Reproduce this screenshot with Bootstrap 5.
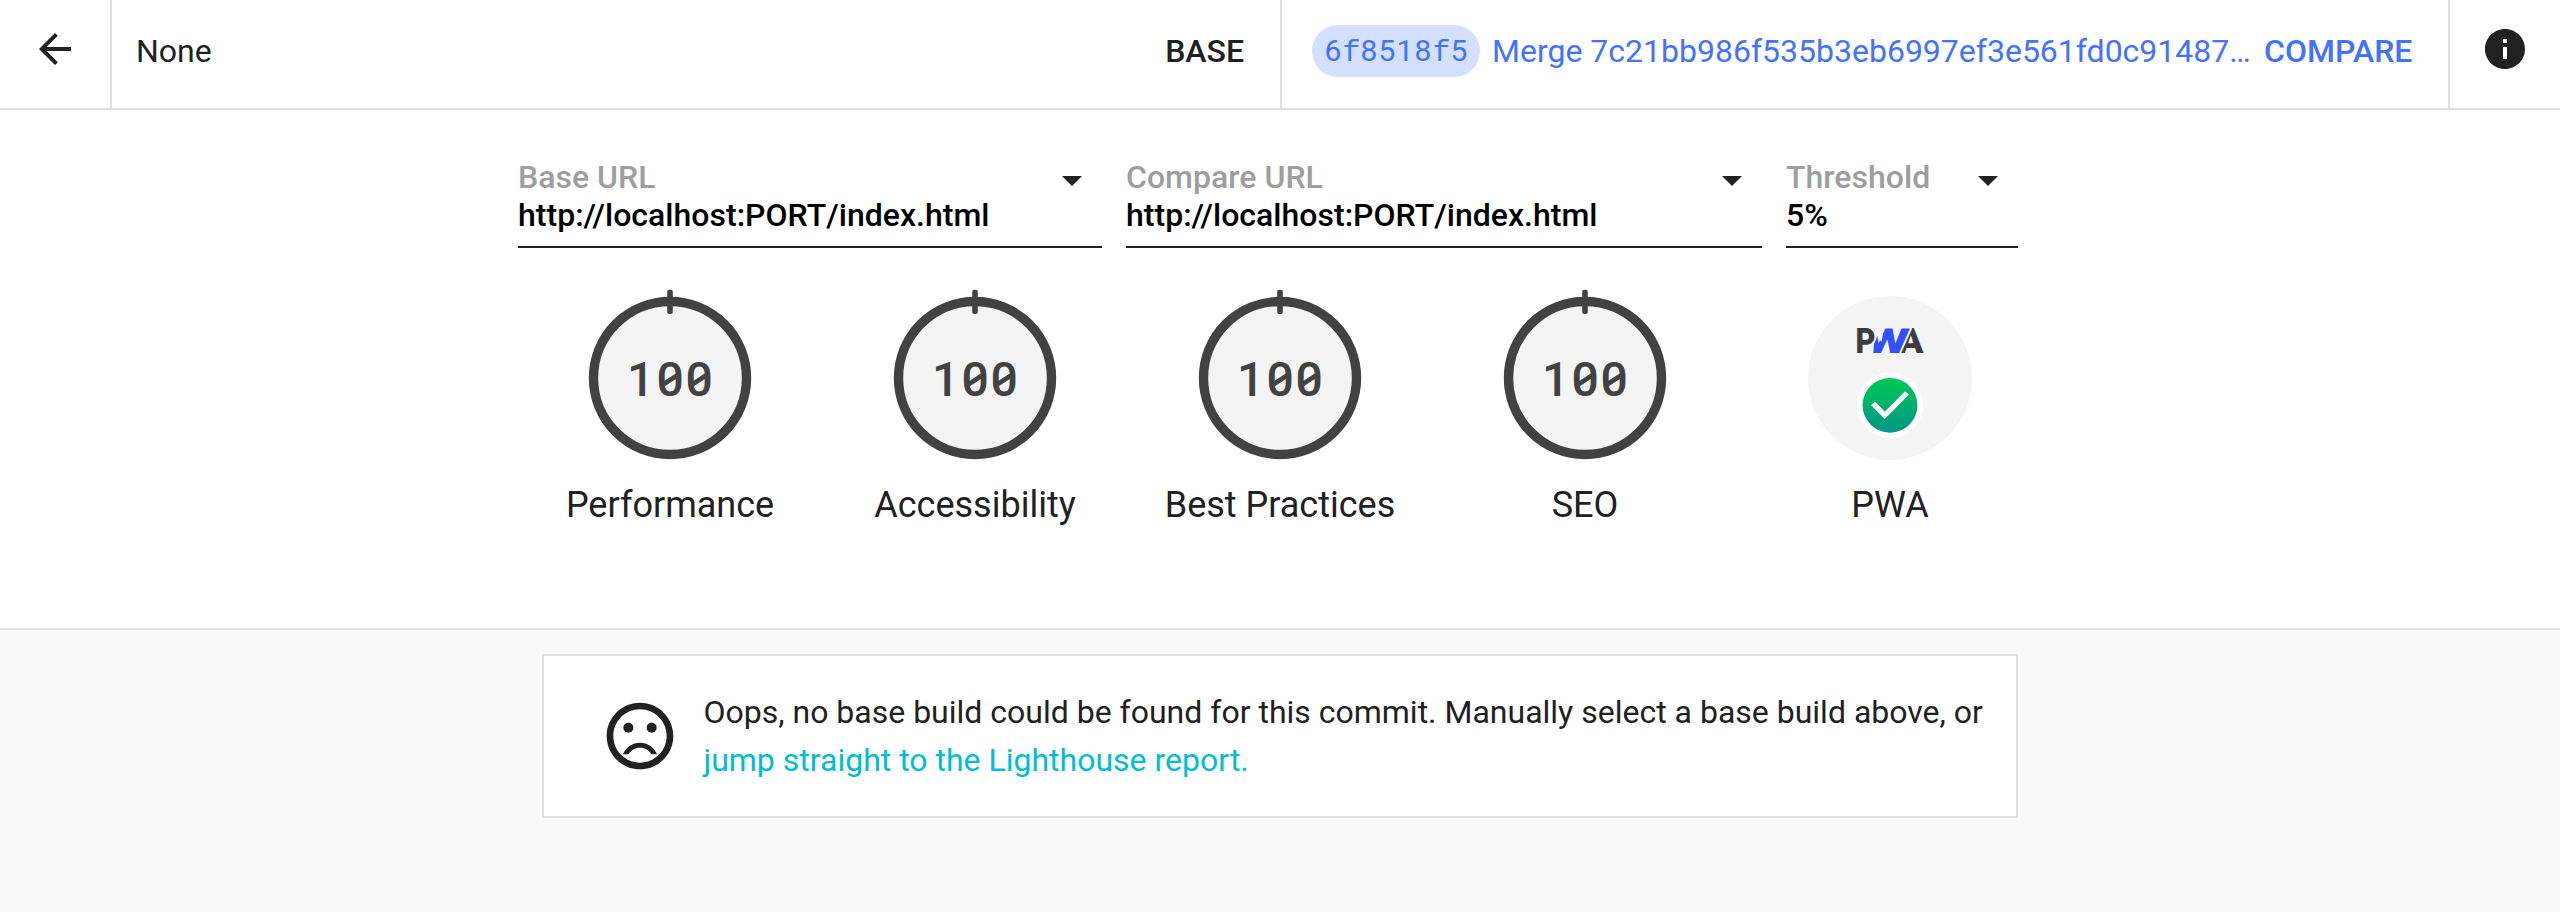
<!DOCTYPE html>
<html lang="en">
<head>
<meta charset="utf-8">
<title>Lighthouse CI</title>
<link href="https://cdn.jsdelivr.net/npm/bootstrap@5.3.0/dist/css/bootstrap.min.css" rel="stylesheet">
<style>
body{font-family:Roboto,sans-serif;font-size:32px;line-height:38px;color:#212121;background:#fafafa}
.topbar{height:110px;border-bottom:2px solid #e0e0e0}
.side{width:112px;padding:25px 0 0 31px;border-right:2px solid #e0e0e0}
.side.info{border-right:0;border-left:2px solid #e0e0e0}
.side svg,.sel svg{display:block;width:48px;height:48px;fill:currentColor}
.pick{padding-bottom:6px}
.mid{font-weight:500}
.base{width:1170px;padding-left:24px;padding-right:36px;border-right:2px solid #e0e0e0}
.cmp{color:#4272ff;padding-left:30px;padding-right:30px}
.hash{width:168px;height:52px;border-radius:26px;background:#d4e0ff;line-height:52px;font-size:30px;letter-spacing:1.15px;padding-left:12.5px;margin-right:12px}
.hash span{font-family:"Liberation Mono",monospace;letter-spacing:0}
.msg{width:758px;margin-right:14px}
.scores{height:520px;border-bottom:2px solid #e0e0e0}
.sels{width:1500px;margin-left:518px;padding-top:48px;gap:24px}
.sel{height:90px;border-bottom:2px solid #212121;font-weight:500;color:#000;letter-spacing:.02px}
.sel .lbl{color:#9e9e9e}
.sel svg{position:absolute;right:6px;top:-2px;color:#212121}
.gauges{width:1525px;margin-left:517.5px;padding-top:34px}
.gauge{width:305px;font-size:36px;line-height:42px}
.gauge svg{display:block;width:192px;height:192px;margin:0 auto 10px}
.notice{width:1476px;height:164px;margin:24px 0 0 542px;border:2px solid #e0e0e0;padding-left:56px;line-height:48px}
.notice svg{width:80px;height:80px;margin-right:23.5px;fill:currentColor;flex:none}
.notice a{color:#00bcd4}
</style>
</head>
<body>
<header class="topbar d-flex bg-white">
  <div class="side flex-shrink-0"><svg viewBox="0 0 24 24"><path d="M20 11H7.83l5.59-5.59L12 4l-8 8 8 8 1.41-1.41L7.83 13H20v-2z"/></svg></div>
  <div class="base pick flex-shrink-0 d-flex align-items-center justify-content-between"><span>None</span><span class="mid">BASE</span></div>
  <div class="cmp pick d-flex align-items-center flex-grow-1">
    <div class="hash text-nowrap flex-shrink-0">6<span>f</span>8518<span>f</span>5</div>
    <div class="msg text-nowrap flex-shrink-0">Merge 7c21bb986f535b3eb6997ef3e561fd0c91487…</div>
    <div class="mid">COMPARE</div>
  </div>
  <div class="side info flex-shrink-0"><svg viewBox="0 0 24 24"><path d="M12 2C6.48 2 2 6.48 2 12s4.48 10 10 10 10-4.48 10-10S17.52 2 12 2zm1 15h-2v-6h2v6zm0-8h-2V7h2v2z"/></svg></div>
</header>
<main>
<section class="scores bg-white">
  <div class="sels d-flex">
    <div class="sel position-relative" style="width:584px"><div class="lbl">Base URL</div><div>http://localhost:PORT/index.html</div><svg viewBox="0 0 24 24"><path d="M7 10l5 5 5-5z"/></svg></div>
    <div class="sel position-relative" style="width:636px"><div class="lbl">Compare URL</div><div>http://localhost:PORT/index.html</div><svg viewBox="0 0 24 24"><path d="M7 10l5 5 5-5z"/></svg></div>
    <div class="sel position-relative" style="width:232px"><div class="lbl">Threshold</div><div>5%</div><svg viewBox="0 0 24 24"><path d="M7 10l5 5 5-5z"/></svg></div>
  </div>
  <svg width="0" height="0" class="position-absolute">
    <defs>
      <linearGradient id="ok" x1="0" y1="0" x2="0" y2="1"><stop offset="0" stop-color="#00c853"/><stop offset="1" stop-color="#009688"/></linearGradient>
      <clipPath id="wcut"><path d="M79 75L80 62L83.500 54L87.500 60L90 46H118V75z"/></clipPath>
      <g id="dial">
        <circle cx="96" cy="96" r="76.500" fill="#f4f4f4" stroke="#424242" stroke-width="9.400"/>
        <rect x="93.200" y="7.800" width="5.600" height="24.200" rx="2" fill="#424242"/>
        <path d="M90 102L103 93.500M118.900 102L131.900 93.500" stroke="#424242" stroke-width="4.500"/>
      </g>
    </defs>
  </svg>
  <div class="gauges d-flex text-center">
    <div class="gauge"><svg viewBox="0 0 192 192"><use href="#dial"/><text x="53 82.600 111.500" y="114" font-size="48" font-weight="500" fill="#424242">100</text></svg>Performance</div>
    <div class="gauge"><svg viewBox="0 0 192 192"><use href="#dial"/><text x="53 82.600 111.500" y="114" font-size="48" font-weight="500" fill="#424242">100</text></svg>Accessibility</div>
    <div class="gauge"><svg viewBox="0 0 192 192"><use href="#dial"/><text x="53 82.600 111.500" y="114" font-size="48" font-weight="500" fill="#424242">100</text></svg>Best Practices</div>
    <div class="gauge"><svg viewBox="0 0 192 192"><use href="#dial"/><text x="53 82.600 111.500" y="114" font-size="48" font-weight="500" fill="#424242">100</text></svg>SEO</div>
    <div class="gauge"><svg viewBox="0 0 192 192">
      <circle cx="96" cy="96" r="82" fill="#f4f4f4"/>
      <g font-size="34.500" font-weight="900" fill="#3d3d3d">
        <text x="61.500" y="71.300" textLength="20" lengthAdjust="spacingAndGlyphs">P</text>
        <text x="104" y="71.300" textLength="25.500" lengthAdjust="spacingAndGlyphs">A</text>
        <g clip-path="url(#wcut)"><text transform="translate(70 71.300) skewX(-8)" textLength="43" lengthAdjust="spacingAndGlyphs" fill="#304ffe" stroke="#f4f4f4" stroke-width="3" paint-order="stroke">W</text></g>
      </g>
      <circle cx="96" cy="123.300" r="33" fill="#fff"/><circle cx="96" cy="123.300" r="27.400" fill="url(#ok)"/>
      <path d="M79 121.300l11.800 12L113 111" fill="none" stroke="#fff" stroke-width="5.300"/>
    </svg>PWA</div>
  </div>
</section>
<section class="notice d-flex align-items-center bg-white">
  <svg viewBox="0 0 24 24"><circle cx="15.500" cy="9.500" r="1.500"/><circle cx="8.500" cy="9.500" r="1.500"/><path d="M12 14c-2.330 0-4.320 1.450-5.120 3.500h1.670c.69-1.190 1.970-2 3.450-2s2.750.81 3.450 2h1.670c-.8-2.050-2.790-3.500-5.120-3.500zM11.990 2C6.470 2 2 6.480 2 12s4.470 10 9.990 10C17.520 22 22 17.520 22 12S17.520 2 11.990 2zM12 20c-4.420 0-8-3.580-8-8s3.580-8 8-8 8 3.580 8 8-3.580 8-8 8z"/></svg>
  <div class="text-nowrap">Oops, no base build could be found for this commit. Manually select a base build above, or<br><a href="#" class="text-decoration-none">jump straight to the Lighthouse report.</a></div>
</section>
</main>
<script src="https://cdn.jsdelivr.net/npm/bootstrap@5.3.0/dist/js/bootstrap.bundle.min.js"></script>
</body>
</html>
